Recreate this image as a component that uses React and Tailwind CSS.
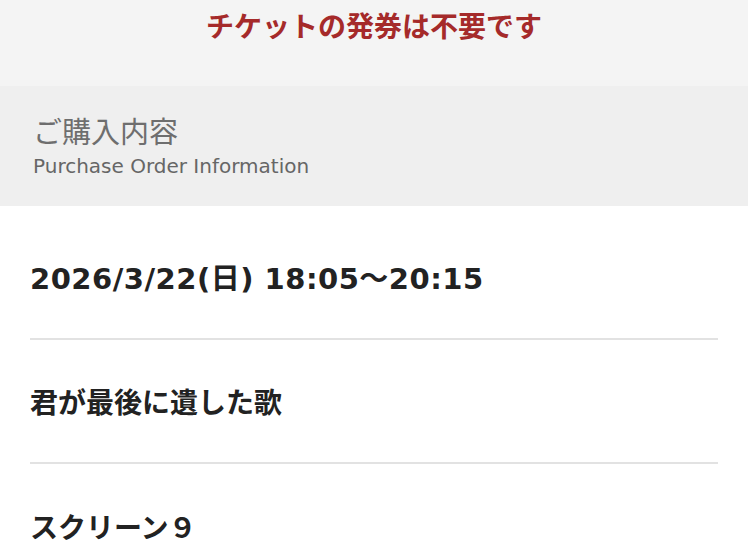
export default function App() {
  const jp = { fontFamily: '"Noto Sans CJK JP", sans-serif' };
  return (
    <div className="w-[748px] h-[541px] overflow-hidden bg-white">
      <div className="h-[86px] bg-[#f4f4f4] flex justify-center pt-[5px]">
        <div className="text-[28px] leading-[40px] font-bold text-[#a52a2a]" style={jp}>
          チケットの発券は不要です
        </div>
      </div>
      <div className="h-[120px] bg-[#efefef] px-[33px] pt-[29px]">
        <div className="text-[29px] leading-[36px] text-[#6e6e6e]" style={{ fontFamily: '"DejaVu Sans", "Noto Sans CJK JP", sans-serif' }}>ご購入内容</div>
        <div className="text-[20px] leading-[26px] text-[#666666] mt-[2px]" style={{ fontFamily: '"DejaVu Sans", sans-serif' }}>Purchase Order Information</div>
      </div>
      <div className="px-[30px] pt-[10px]">
        <div className="h-[124px] flex items-center pt-[6px] border-b-2 border-[#e2e2e2]">
          <div className="text-[29px] font-bold text-[#222222] tracking-[0.5px]" style={{ fontFamily: '"DejaVu Sans", "Noto Sans CJK JP", sans-serif' }}>2026/3/22(日) 18:05〜20:15</div>
        </div>
        <div className="h-[124px] flex items-center border-b-2 border-[#e2e2e2]">
          <div className="text-[28px] font-bold text-[#222222]" style={jp}>君が最後に遺した歌</div>
        </div>
        <div className="h-[124px] flex items-center">
          <div className="text-[28px] font-bold text-[#222222]" style={jp}>スクリーン９</div>
        </div>
      </div>
    </div>
  );
}
